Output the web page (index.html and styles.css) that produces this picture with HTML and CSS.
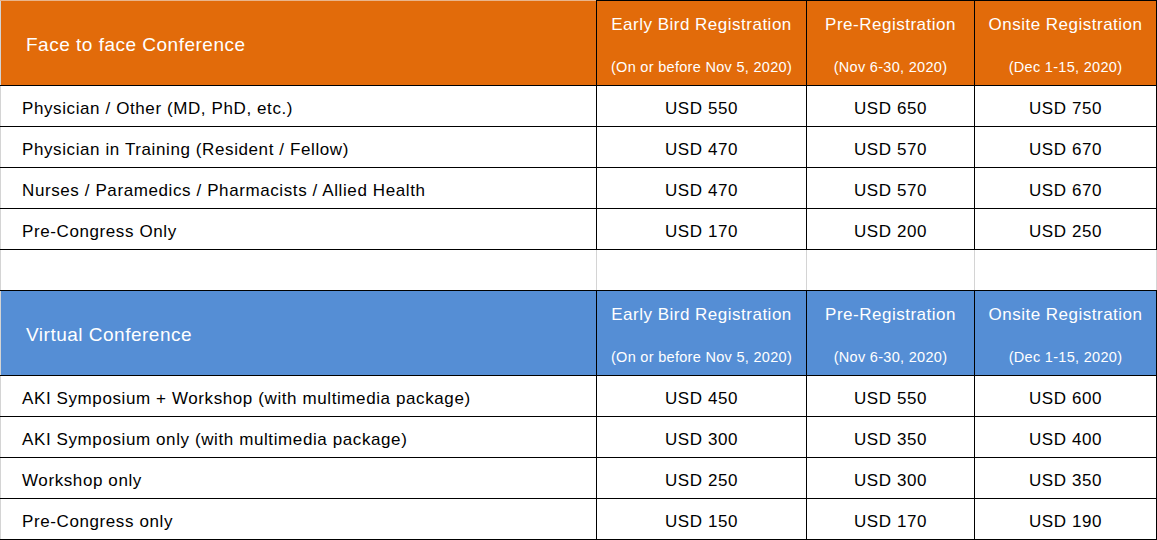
FILE: index.html
```html
<!DOCTYPE html>
<html>
<head>
<meta charset="utf-8">
<link rel="stylesheet" href="styles.css">
</head>
<body>
<table class="fees">
  <colgroup>
    <col class="c-name">
    <col class="c-early">
    <col class="c-pre">
    <col class="c-onsite">
  </colgroup>
  <tbody>
    <tr class="head orange">
      <th class="title">Face to face Conference</th>
      <th><div class="period">Early Bird Registration</div><div class="dates">(On or before Nov 5, 2020)</div></th>
      <th><div class="period">Pre-Registration</div><div class="dates">(Nov 6-30, 2020)</div></th>
      <th><div class="period">Onsite Registration</div><div class="dates">(Dec 1-15, 2020)</div></th>
    </tr>
    <tr class="row"><td class="name">Physician / Other (MD, PhD, etc.)</td><td>USD 550</td><td>USD 650</td><td>USD 750</td></tr>
    <tr class="row"><td class="name">Physician in Training (Resident / Fellow)</td><td>USD 470</td><td>USD 570</td><td>USD 670</td></tr>
    <tr class="row"><td class="name">Nurses / Paramedics / Pharmacists / Allied Health</td><td>USD 470</td><td>USD 570</td><td>USD 670</td></tr>
    <tr class="row"><td class="name">Pre-Congress Only</td><td>USD 170</td><td>USD 200</td><td>USD 250</td></tr>
    <tr class="spacer"><td></td><td></td><td></td><td></td></tr>
    <tr class="head blue">
      <th class="title">Virtual Conference</th>
      <th><div class="period">Early Bird Registration</div><div class="dates">(On or before Nov 5, 2020)</div></th>
      <th><div class="period">Pre-Registration</div><div class="dates">(Nov 6-30, 2020)</div></th>
      <th><div class="period">Onsite Registration</div><div class="dates">(Dec 1-15, 2020)</div></th>
    </tr>
    <tr class="row"><td class="name">AKI Symposium + Workshop (with multimedia package)</td><td>USD 450</td><td>USD 550</td><td>USD 600</td></tr>
    <tr class="row"><td class="name">AKI Symposium only (with multimedia package)</td><td>USD 300</td><td>USD 350</td><td>USD 400</td></tr>
    <tr class="row"><td class="name">Workshop only</td><td>USD 250</td><td>USD 300</td><td>USD 350</td></tr>
    <tr class="row"><td class="name">Pre-Congress only</td><td>USD 150</td><td>USD 170</td><td>USD 190</td></tr>
  </tbody>
</table>
</body>
</html>
```
FILE: styles.css
```css
html, body {
  margin: 0;
  padding: 0;
  background: #ffffff;
}

body {
  font-family: "Liberation Sans", Arial, sans-serif;
  color: #000;
}

.fees {
  border-collapse: collapse;
  table-layout: fixed;
  width: 1156px;
  border-top: 1px solid #e9b58c;
  border-left: 1px solid #d4d4d4;
}

.c-name { width: 596px; }
.c-early { width: 210px; }
.c-pre { width: 168px; }
.c-onsite { width: 182px; }

.fees th,
.fees td {
  padding: 0;
  border: 1px solid #000;
  text-align: center;
  font-weight: normal;
}

.fees tr > :first-child {
  border-left: 1px solid #d4d4d4;
}

.head {
  height: 85px;
  color: #fff;
}

.head th {
  vertical-align: top;
  padding-top: 14px;
}

.orange th { background: #e26b0a; }
.blue th { background: #558ed5; }

.head .title {
  text-align: left;
  vertical-align: middle;
  padding: 4px 0 0 25px;
  font-size: 19px;
  letter-spacing: 0.5px;
}

.orange .title { border-top: 1px solid #e9b58c; }

.period {
  font-size: 17px;
  letter-spacing: 0.5px;
  line-height: 20px;
}

.dates {
  font-size: 14.5px;
  letter-spacing: 0.3px;
  line-height: 20px;
  margin-top: 22px;
}

.row {
  height: 41px;
}

.row td {
  font-size: 17px;
  letter-spacing: 0.6px;
  vertical-align: middle;
  padding-top: 5px;
}

.row .name {
  text-align: left;
  padding-left: 21px;
}

.spacer {
  height: 41px;
}

.spacer td {
  border-left: 1px solid #d4d4d4;
  border-right: 1px solid #d4d4d4;
}
```
